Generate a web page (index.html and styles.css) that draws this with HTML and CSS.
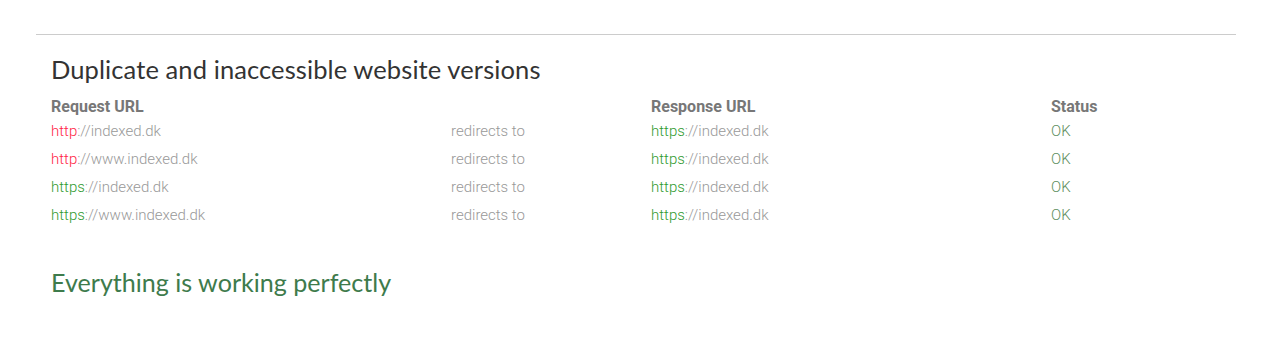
FILE: index.html
```html
<!DOCTYPE html>
<html>
<head>
<meta charset="utf-8">
<link rel="stylesheet" href="styles.css">
</head>
<body>
<div class="container">
  <hr class="rule">
  <section class="section">
    <h2 class="title">Duplicate and inaccessible website versions</h2>
    <div class="table">
      <div class="row head">
        <div class="c1">Request URL</div>
        <div class="c2"></div>
        <div class="c3">Response URL</div>
        <div class="c4">Status</div>
      </div>
      <div class="row">
        <div class="c1"><span class="bad">http</span>://indexed.dk</div>
        <div class="c2">redirects to</div>
        <div class="c3"><span class="good">https</span>://indexed.dk</div>
        <div class="c4 ok">OK</div>
      </div>
      <div class="row">
        <div class="c1"><span class="bad">http</span>://www.indexed.dk</div>
        <div class="c2">redirects to</div>
        <div class="c3"><span class="good">https</span>://indexed.dk</div>
        <div class="c4 ok">OK</div>
      </div>
      <div class="row">
        <div class="c1"><span class="good">https</span>://indexed.dk</div>
        <div class="c2">redirects to</div>
        <div class="c3"><span class="good">https</span>://indexed.dk</div>
        <div class="c4 ok">OK</div>
      </div>
      <div class="row">
        <div class="c1"><span class="good">https</span>://www.indexed.dk</div>
        <div class="c2">redirects to</div>
        <div class="c3"><span class="good">https</span>://indexed.dk</div>
        <div class="c4 ok">OK</div>
      </div>
    </div>
    <h2 class="title success">Everything is working perfectly</h2>
  </section>
</div>
</body>
</html>
```
FILE: styles.css
```css
html, body {
  margin: 0;
  padding: 0;
  background: #fff;
}
body {
  font-family: Roboto, "Liberation Sans", sans-serif;
  font-size: 15px;
  font-weight: 300;
  color: #999;
}
.container {
  width: 1200px;
  margin-left: 36px;
  padding-top: 34px;
}
.rule {
  margin: 0;
  border: 0;
  border-top: 1px solid #ccc;
}
.section {
  padding: 0 15px;
}
.title {
  margin: 19px 0 0;
  font-family: Lato, "Open Sans", sans-serif;
  font-weight: 400;
  font-size: 25.5px;
  letter-spacing: 0.1px;
  line-height: 30px;
  color: #333;
}
.table {
  margin-top: 13px;
}
.row {
  display: grid;
  grid-template-columns: 400px 200px 400px 170px;
  height: 28px;
  line-height: 20px;
}
.row.head {
  height: 24px;
  font-size: 16px;
  font-weight: 700;
  color: #777;
}
.bad { color: #ff1e46; }
.good { color: #2f9a2f; }
.ok { color: #5e8e5e; }
.title.success {
  margin-top: 34px;
  font-size: 25.1px;
  letter-spacing: 0;
  color: #3e7b4c;
}
```
